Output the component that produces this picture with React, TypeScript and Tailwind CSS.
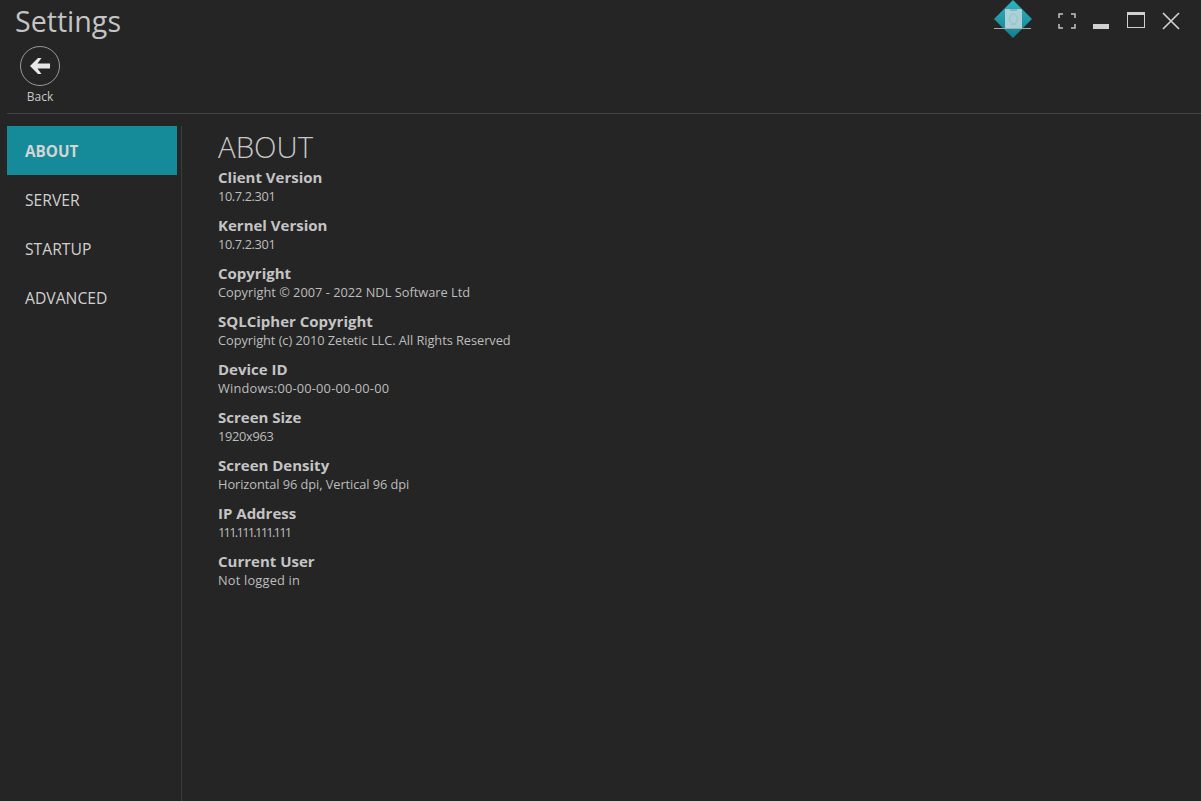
const menuItems = ['ABOUT', 'SERVER', 'STARTUP', 'ADVANCED'];

const aboutRows = [
    { label: 'Client Version', value: '10.7.2.301', tracking: 'tracking-[-0.4px]' },
    { label: 'Kernel Version', value: '10.7.2.301', tracking: 'tracking-[-0.4px]' },
    { label: 'Copyright', value: 'Copyright © 2007 - 2022 NDL Software Ltd', tracking: '' },
    { label: 'SQLCipher Copyright', value: 'Copyright (c) 2010 Zetetic LLC. All Rights Reserved', tracking: 'tracking-[-0.05px]' },
    { label: 'Device ID', value: 'Windows:00-00-00-00-00-00', tracking: 'tracking-[0.2px]' },
    { label: 'Screen Size', value: '1920x963', tracking: 'tracking-[-0.3px]' },
    { label: 'Screen Density', value: 'Horizontal 96 dpi, Vertical 96 dpi', tracking: 'tracking-[-0.06px]' },
    { label: 'IP Address', value: '111.111.111.111', tracking: 'tracking-[-1.7px]' },
    { label: 'Current User', value: 'Not logged in', tracking: 'tracking-[0.2px]' },
];

function AppLogo() {
    return (
        <svg width="40" height="40" viewBox="0 0 40 40">
            <defs>
                <linearGradient id="logoFill" x1="0" y1="0" x2="0" y2="1">
                    <stop offset="0" stopColor="#2fb4c4" />
                    <stop offset="1" stopColor="#12808f" />
                </linearGradient>
            </defs>
            <path d="M20 0 L39 19 L20 38 L1 19 Z" fill="url(#logoFill)" />
            <path d="M12 10 Q12 9 13 9 L28 9 Q29 9 29 10 L29 28 L12 28 Z" fill="#acd0d6" />
            <path d="M17 9 h7 v2 h-7 Z" fill="#7fb9c2" />
            <ellipse cx="20.5" cy="19" rx="4" ry="5" fill="none" stroke="#8fc3cb" strokeWidth="1" />
            <path d="M17.5 26 Q20.5 22 23.5 26" fill="none" stroke="#8fc3cb" strokeWidth="1" />
            <path d="M1 28.5 H38" stroke="#a9a9a9" strokeWidth="1" />
        </svg>
    );
}

function FullscreenIcon() {
    return (
        <svg width="18" height="16" viewBox="0 0 18 16" fill="none" stroke="#c4c4c4" strokeWidth="1.5">
            <path d="M1 5 V1 H5 M13 1 H17 V5 M17 11 V15 H13 M5 15 H1 V11" />
        </svg>
    );
}

export default function App() {
    return (
        <div className="w-[1201px] h-[801px] overflow-hidden bg-[#252525] text-[#c8c8c8] font-['Open_Sans','Noto_Sans',sans-serif] flex flex-col">
            {/* Title bar */}
            <div className="h-[114px] shrink-0 ml-[7px] border-b border-[#444444] flex justify-between">
                <div className="flex flex-col">
                    <h1 className="ml-2 text-[28.6px] leading-[42px] text-[#c4c4c4]">Settings</h1>
                    <button className="ml-[13px] mt-[4px] w-10 flex flex-col items-center">
                        <span className="w-10 h-10 rounded-full border border-[#9a9a9a] flex items-center justify-center">
                            <svg width="20" height="16" viewBox="0 0 20 16" fill="#e6e6e6">
                                <path d="M0 8 L8 0 H11.5 L7.5 5.5 H20 V10.5 H7.5 L11.5 16 H8 Z" />
                            </svg>
                        </span>
                        <span className="mt-[3px] text-[12px] leading-[16px] whitespace-nowrap">Back</span>
                    </button>
                </div>
                <div className="flex items-start">
                    <AppLogo />
                    <div className="ml-[25px] mt-[13px]"><FullscreenIcon /></div>
                    <div className="ml-[17px] mt-[24px] w-4 h-[5px] bg-[#d0d0d0]" />
                    <div className="ml-[18px] mt-[12px] w-[18px] h-4 border border-t-[3px] border-[#d0d0d0]" />
                    <svg className="ml-[17px] mr-[21px] mt-[12px]" width="18" height="18" viewBox="0 0 18 18" stroke="#d0d0d0" strokeWidth="1.7">
                        <path d="M1 1 L17 17 M17 1 L1 17" />
                    </svg>
                </div>
            </div>

            <div className="flex flex-1 pt-3 pl-[7px]">
                {/* Sidebar */}
                <nav className="w-[175px] shrink-0 border-r border-[#3c3c3c] pr-1">
                    {menuItems.map((item, i) => (
                        <div
                            key={item}
                            className={`h-[49px] pl-[18px] pt-[2px] flex items-center ${i === 0 ? 'bg-[#158a98] text-[15.3px] font-bold text-[#d4d4d4]' : 'text-[15.7px] text-[#d0d0d0]'}`}
                        >
                            {item}
                        </div>
                    ))}
                </nav>

                {/* About panel */}
                <main className="pl-[36px]">
                    <h2 className="mt-[4px] text-[29.4px] leading-[35px] font-light text-[#c8c8c8]">ABOUT</h2>
                    <div className="flex flex-col">
                        {aboutRows.map((row) => (
                            <div key={row.label} className="h-12">
                                <div className="text-[15px] leading-[24px] font-bold text-[#c4c4c4]">{row.label}</div>
                                <div className={`text-[12.8px] leading-[14px] text-[#bdbdbd] ${row.tracking}`}>{row.value}</div>
                            </div>
                        ))}
                    </div>
                </main>
            </div>
        </div>
    );
}
